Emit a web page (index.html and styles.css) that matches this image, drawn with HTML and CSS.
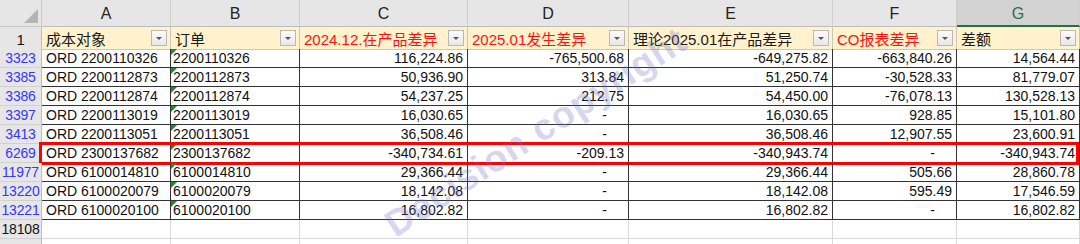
FILE: index.html
```html
<!DOCTYPE html>
<html>
<head>
<meta charset="utf-8">
<link rel="stylesheet" href="styles.css">
</head>
<body>
<div class="sheet">
  <div class="row colhdr">
    <div class="corner"><span class="corner-tri"></span></div>
    <div class="ch">A</div><div class="ch">B</div><div class="ch">C</div><div class="ch">D</div><div class="ch">E</div><div class="ch">F</div><div class="ch sel">G</div>
  </div>
  <div class="row hdr">
    <div class="rh">1</div>
    <div class="c h"><span>成本对象</span><span class="fb"></span></div>
    <div class="c h"><span>订单</span><span class="fb"></span></div>
    <div class="c h red"><span>2024.12.在产品差异</span><span class="fb"></span></div>
    <div class="c h red"><span>2025.01发生差异</span><span class="fb"></span></div>
    <div class="c h"><span>理论2025.01在产品差异</span><span class="fb"></span></div>
    <div class="c h red"><span>CO报表差异</span><span class="fb"></span></div>
    <div class="c h"><span>差额</span><span class="fb"></span></div>
  </div>
  <div class="row data">
    <div class="rh f">3323</div><div class="c">ORD 2200110326</div><div class="c tri">2200110326</div><div class="c n">116,224.86</div><div class="c n">-765,500.68</div><div class="c n">-649,275.82</div><div class="c n">-663,840.26</div><div class="c n">14,564.44</div>
  </div>
  <div class="row data">
    <div class="rh f">3385</div><div class="c">ORD 2200112873</div><div class="c tri">2200112873</div><div class="c n">50,936.90</div><div class="c n">313.84</div><div class="c n">51,250.74</div><div class="c n">-30,528.33</div><div class="c n">81,779.07</div>
  </div>
  <div class="row data">
    <div class="rh f">3386</div><div class="c">ORD 2200112874</div><div class="c tri">2200112874</div><div class="c n">54,237.25</div><div class="c n">212.75</div><div class="c n">54,450.00</div><div class="c n">-76,078.13</div><div class="c n">130,528.13</div>
  </div>
  <div class="row data">
    <div class="rh f">3397</div><div class="c">ORD 2200113019</div><div class="c tri">2200113019</div><div class="c n">16,030.65</div><div class="c n dash">-</div><div class="c n">16,030.65</div><div class="c n">928.85</div><div class="c n">15,101.80</div>
  </div>
  <div class="row data">
    <div class="rh f">3413</div><div class="c">ORD 2200113051</div><div class="c tri">2200113051</div><div class="c n">36,508.46</div><div class="c n dash">-</div><div class="c n">36,508.46</div><div class="c n">12,907.55</div><div class="c n">23,600.91</div>
  </div>
  <div class="row data hl">
    <div class="rh f">6269</div><div class="c">ORD 2300137682</div><div class="c tri">2300137682</div><div class="c n">-340,734.61</div><div class="c n">-209.13</div><div class="c n">-340,943.74</div><div class="c n dash">-</div><div class="c n">-340,943.74</div>
  </div>
  <div class="row data">
    <div class="rh f">11977</div><div class="c">ORD 6100014810</div><div class="c tri">6100014810</div><div class="c n">29,366.44</div><div class="c n dash">-</div><div class="c n">29,366.44</div><div class="c n">505.66</div><div class="c n">28,860.78</div>
  </div>
  <div class="row data">
    <div class="rh f">13220</div><div class="c">ORD 6100020079</div><div class="c tri">6100020079</div><div class="c n">18,142.08</div><div class="c n dash">-</div><div class="c n">18,142.08</div><div class="c n">595.49</div><div class="c n">17,546.59</div>
  </div>
  <div class="row data">
    <div class="rh f">13221</div><div class="c">ORD 6100020100</div><div class="c tri">6100020100</div><div class="c n">16,802.82</div><div class="c n dash">-</div><div class="c n">16,802.82</div><div class="c n dash">-</div><div class="c n">16,802.82</div>
  </div>
  <div class="row empty">
    <div class="rh">18108</div><div class="c"></div><div class="c"></div><div class="c"></div><div class="c"></div><div class="c"></div><div class="c"></div><div class="c"></div>
  </div>
  <div class="row empty">
    <div class="rh"></div><div class="c"></div><div class="c"></div><div class="c"></div><div class="c"></div><div class="c"></div><div class="c"></div><div class="c"></div>
  </div>
  <div class="watermark">Decision copyright</div>
</div>
</body>
</html>
```
FILE: styles.css
```css
* { box-sizing: border-box; }
html, body { margin: 0; padding: 0; background: #fff; }
.sheet {
  position: relative;
  width: 1080px;
  height: 244px;
  overflow: hidden;
  font-family: "Liberation Sans", Arial, "Noto Sans CJK SC", sans-serif;
  font-size: 14px;
  color: #111;
}
.row {
  display: grid;
  grid-template-columns: 42px 129px 129px 168px 161px 204px 124px 123px;
  position: relative;
}
.colhdr { height: 27px; background: #e6e6e6; }
.hdr { height: 22px; }
.data, .empty { height: 19px; }

.corner {
  position: relative;
  border-right: 1px solid #c8c8c8;
  border-bottom: 1px solid #c8c8c8;
  background: #e6e6e6;
}
.corner-tri {
  position: absolute;
  right: 3px;
  bottom: 3px;
  width: 0;
  height: 0;
  border-left: 14px solid transparent;
  border-bottom: 14px solid #b4b4b4;
}
.ch {
  display: flex;
  align-items: center;
  justify-content: center;
  font-size: 16px;
  color: #222;
  border-right: 1px solid #cfcfcf;
  border-bottom: 1px solid #bdbdbd;
  padding-top: 2px;
}
.ch.sel {
  background: #d2d2d2;
  color: #217346;
  border-bottom: 2px solid #217346;
}

.rh {
  display: flex;
  align-items: center;
  justify-content: center;
  padding: 0;
  background: #e6e6e6;
  border-right: 1px solid #bdbdbd;
  border-bottom: 1px solid #d0d0d0;
  color: #111;
  font-size: 14px;
  letter-spacing: -0.2px;
  white-space: nowrap;
}
.hdr .rh { font-size: 15px; padding-top: 3px; }
.rh.f { color: #3636ff; }

.c {
  position: relative;
  display: flex;
  align-items: center;
  padding: 0 4px;
  white-space: nowrap;
  border-right: 1px solid #d9d9d9;
  border-bottom: 1px solid #d9d9d9;
}
.h {
  background: #fff2cc;
  justify-content: space-between;
  font-family: "Noto Sans CJK SC", "Liberation Sans", sans-serif;
  font-size: 15px;
  color: #1a1a1a;
  padding-right: 3px;
  border-right: 1px solid #cfc7b0;
  border-bottom: 1px solid #c8c8c8;
}
.h > span:first-child { font-family: "Liberation Sans", "Noto Sans CJK SC", sans-serif; padding-top: 1px; }
.h.red { color: #ff1010; }
.fb {
  flex: none;
  width: 16px;
  height: 16px;
  border: 1px solid #b8b8b8;
  background: linear-gradient(#fbfbfb, #e8e8e8);
  position: relative;
}
.fb::after {
  content: "";
  position: absolute;
  left: 4px;
  top: 6px;
  border-left: 3px solid transparent;
  border-right: 3px solid transparent;
  border-top: 3px solid #555;
}

.data .c {
  border-right: 1px solid #333;
  border-bottom: 1px solid #333;
}
.data .c.n { justify-content: flex-end; }
.data .c.dash { padding-right: 21px; }
.data .c.tri::before {
  content: "";
  position: absolute;
  left: 0;
  top: 0;
  width: 0;
  height: 0;
  border-top: 6px solid #1f8a2e;
  border-right: 6px solid transparent;
}
.c.tri { padding-left: 2px; }

.hl::after {
  content: "";
  position: absolute;
  left: 39px;
  right: 1px;
  top: -2px;
  bottom: -2px;
  border: 3px solid #f00;
  pointer-events: none;
}

.watermark {
  position: absolute;
  left: 536px;
  top: 132px;
  font-family: "Liberation Sans", Arial, sans-serif;
  font-weight: bold;
  font-size: 37px;
  line-height: 1;
  letter-spacing: 1px;
  color: rgba(110, 110, 200, 0.3);
  transform: translate(-50%, -50%) rotate(-33deg);
  pointer-events: none;
  white-space: nowrap;
}
```
